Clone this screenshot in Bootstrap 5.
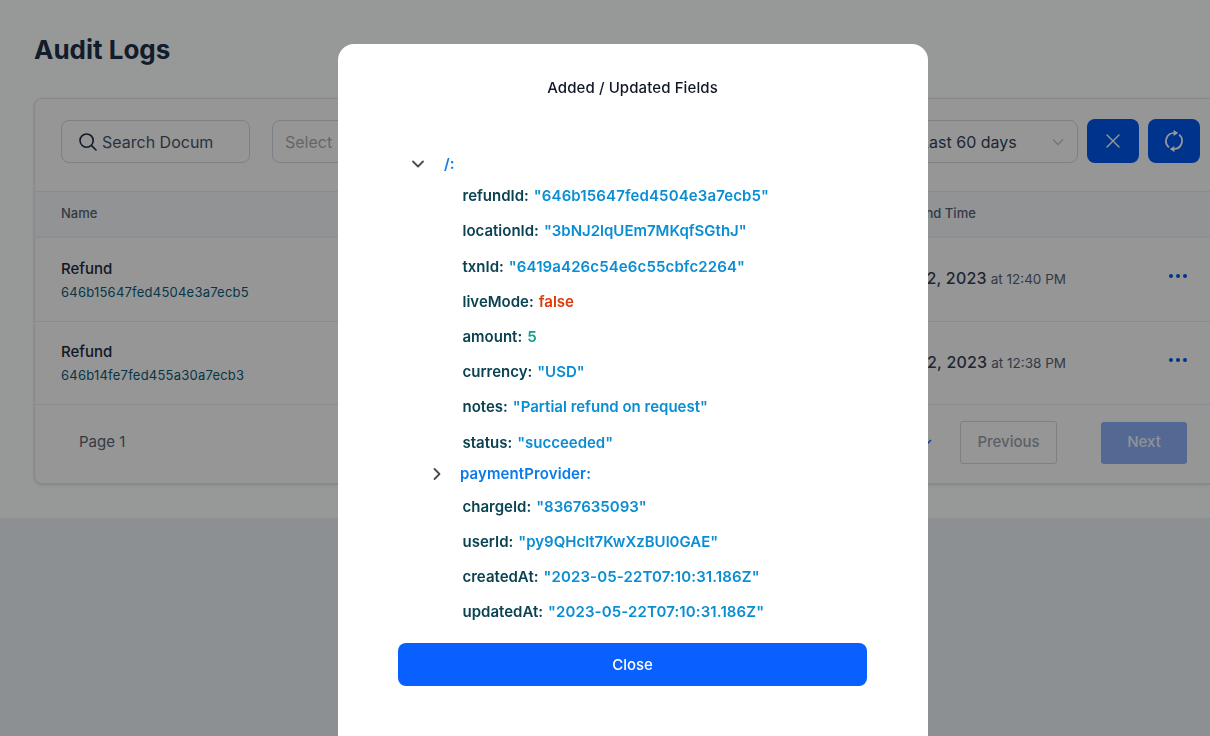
<!DOCTYPE html>
<html lang="en">
<head>
<meta charset="utf-8">
<title>Audit Logs</title>
<link href="https://cdn.jsdelivr.net/npm/bootstrap@5.3.0/dist/css/bootstrap.min.css" rel="stylesheet">
<style>
html,body{height:100%;overflow:hidden}
body{font-family:Inter,"Liberation Sans",sans-serif;color:#1e293b;background:#e9f0f5;font-size:14px}
.pg-top{height:518px;background:#fcfffe;padding:27px 0 0 34px;border-left:1px solid #fff;overflow:hidden}
.pg-title{font-size:26px;font-weight:700;line-height:46px;margin:0 0 25px -1px;color:#1e3048}
.log-panel{width:1200px;height:386px;margin-left:-1px;background:#fbfbfb;border:1px solid #e0e3e6;border-radius:8px;box-shadow:0 1px 3px rgba(0,0,0,.15)}
.filters{height:92px;padding:21px 9px 0 26px;display:flex;align-items:flex-start}
.fld{height:43px;border:1px solid #d0d5dd;border-radius:8px;display:flex;align-items:center;font-size:16px;color:#475467}
.fld-search{width:189px;padding-left:16px;gap:4px}
.fld-sel{width:620px;margin-left:22px;padding-left:12px;color:#a6abb3}
.fld-range{width:186px;padding:0 13px 0 27px;color:#344054;justify-content:space-between}
.sq-btn{width:52px;height:44px;margin:-1px 0 0 9px;background:#0056e8;border-radius:8px;display:flex;align-items:center;justify-content:center;border:0;padding:0}
.log-head{height:47px;display:flex;align-items:center;justify-content:space-between;background:#f2f5f9;border-top:1px solid #e3e8ee;border-bottom:2px solid #eceff3;padding:0 0 0 26px;font-size:13px;font-weight:500;color:#566173}
.head-date{width:347px}
.log-row{height:83.5px;display:flex;align-items:center;padding:0 46px 0 26px;border-bottom:1px solid #e3e8ee}
.r-name{font-size:15px;font-weight:500;line-height:18px;color:#1e293b;margin-top:2px}
.r-id{font-size:13px;line-height:18px;color:#0a5a78;letter-spacing:.23px;margin-top:5px}
.r-date{font-size:16px;font-weight:500;letter-spacing:.2px;color:#344054;display:flex;align-items:baseline;gap:4px;margin:-2px 103px 0 auto;white-space:nowrap}
.r-date small{font-size:13.5px;font-weight:400;letter-spacing:0;color:#566173}
.dots{display:flex;gap:3px;margin-top:-6px}
.dots i{width:4px;height:4px;border-radius:50%;background:#0056e8;display:block}
.log-foot{height:79px;display:flex;align-items:center;padding:0 46px 4px 44px;color:#566173;font-size:15px}
.pg-size{margin-left:auto;margin-right:28px;display:flex;align-items:center;gap:6px;color:#0056e8}
.pg-prev{width:97px;height:43px;border:1px solid #d0d5dd;border-radius:3px;background:transparent;color:#9aa1ab;font-weight:500;margin-right:44px;padding:0}
.pg-next{width:86px;height:42px;border:0;border-radius:3px;background:#8aaff5;color:#eef3fe;font-weight:500;padding:0}
.shade{position:fixed;inset:0;background:rgba(0,0,0,.4);backdrop-filter:blur(.6px);z-index:1040}
.modal-dialog.audit-dlg{max-width:590px;width:590px;margin:44px 0 0 338px}
.audit-dlg .modal-content{border:0;border-radius:16px;height:760px;display:block;padding:0 61px 0 60px}
.dlg-title{font-size:15px;font-weight:500;line-height:20px;letter-spacing:.1px;text-align:center;color:#101828;padding-top:34px;height:105.6px;margin:0}
.tree-head{height:28.8px;display:flex;align-items:center;color:#0a7bea;font-weight:600;font-size:15px;white-space:nowrap}
.tree-head svg{flex:none}
.tree-root{padding-left:13px}
.tree-root span{margin-left:19px}
.tree-sub{padding-left:32px}
.tree-sub span{margin-left:16px;letter-spacing:.1px}
.leaf{height:35.2px;display:flex;align-items:center;gap:5px;padding:1px 0 0 64.5px;font-size:15px;font-weight:600;color:#0a4252;white-space:nowrap}
.v-str{color:#0a8ed3}.v-wide{letter-spacing:.12px}.v-bool{color:#dd3a08}.v-num{color:#12a08f}
.close-btn{display:block;width:469px;height:43px;margin-top:13.4px;padding-top:7px;background:#0a60ff;border:0;border-radius:8px;color:#fff;font-size:15px;font-weight:500}
</style>
</head>
<body>
<div class="pg-top">
  <h1 class="pg-title">Audit Logs</h1>
  <div class="log-panel">
    <div class="filters">
      <div class="fld fld-search"><svg width="20" height="20" viewBox="0 0 20 20" fill="none" stroke="#1e2d42" stroke-width="1.6" stroke-linecap="round"><circle cx="8.6" cy="8.6" r="6.6"/><path d="M13.6 13.6 18 18"/></svg><span>Search Docum</span></div>
      <div class="fld fld-sel">Select</div>
      <div class="fld fld-range"><span>Last 60 days</span><svg width="12" height="8" viewBox="0 0 12 8" fill="none" stroke="#bcc1c8" stroke-width="1.3"><path d="m1 1.5 5 5 5-5"/></svg></div>
      <button class="sq-btn" type="button" aria-label="Clear"><svg width="16" height="16" viewBox="0 0 16 16" fill="none" stroke="#fff" stroke-width="1.4" stroke-linecap="round"><path d="m2 2 12 12M14 2 2 14"/></svg></button>
      <button class="sq-btn" type="button" aria-label="Refresh"><svg width="20" height="22" viewBox="0 0 20 22" fill="none" stroke="#fff" stroke-width="1.7" stroke-linecap="butt"><path d="M10 3A8.1 8.1 0 0 0 4.9 17.3M15.1 4.7A8.1 8.1 0 0 1 10 19"/><path d="M9.6 0 14.2 3 9.6 6zM10.4 16 5.8 19l4.6 3z" fill="#fff" stroke="none"/></svg></button>
    </div>
    <div class="log-head"><span>Name</span><span class="head-date">Date and Time</span></div>
    <div class="log-row"><div><div class="r-name">Refund</div><div class="r-id">646b15647fed4504e3a7ecb5</div></div><div class="r-date">May 22, 2023 <small>at 12:40 PM</small></div><div class="dots"><i></i><i></i><i></i></div></div>
    <div class="log-row"><div><div class="r-name">Refund</div><div class="r-id">646b14fe7fed455a30a7ecb3</div></div><div class="r-date">May 22, 2023 <small>at 12:38 PM</small></div><div class="dots"><i></i><i></i><i></i></div></div>
    <div class="log-foot"><span>Page 1</span><span class="pg-size">10<svg width="10" height="7" viewBox="0 0 10 7" fill="none" stroke="#0056e8" stroke-width="1.3"><path d="m1 1 4 4 4-4"/></svg></span><button class="pg-prev" type="button">Previous</button><button class="pg-next" type="button">Next</button></div>
  </div>
</div>
<div class="shade"></div>
<div class="modal d-block" tabindex="-1" style="z-index:1050">
  <div class="modal-dialog audit-dlg">
    <div class="modal-content">
      <h2 class="dlg-title">Added / Updated Fields</h2>
      <div class="tree-head tree-root"><svg width="14" height="14" viewBox="0 0 14 14" fill="none" stroke="#4a4a4a" stroke-width="1.8" stroke-linecap="round" stroke-linejoin="round"><path d="m2 4.5 5 5 5-5"/></svg><span>/:</span></div>
      <div class="leaf">refundId: <span class="v-str v-wide">"646b15647fed4504e3a7ecb5"</span></div>
      <div class="leaf">locationId: <span class="v-str">"3bNJ2lqUEm7MKqfSGthJ"</span></div>
      <div class="leaf">txnId: <span class="v-str v-wide">"6419a426c54e6c55cbfc2264"</span></div>
      <div class="leaf">liveMode: <span class="v-bool">false</span></div>
      <div class="leaf">amount: <span class="v-num">5</span></div>
      <div class="leaf">currency: <span class="v-str">"USD"</span></div>
      <div class="leaf">notes: <span class="v-str">"Partial refund on request"</span></div>
      <div class="leaf">status: <span class="v-str">"succeeded"</span></div>
      <div class="tree-head tree-sub"><svg width="14" height="14" viewBox="0 0 14 14" fill="none" stroke="#4a4a4a" stroke-width="1.8" stroke-linecap="round" stroke-linejoin="round"><path d="m4.5 2 5 5-5 5"/></svg><span>paymentProvider:</span></div>
      <div class="leaf">chargeId: <span class="v-str">"8367635093"</span></div>
      <div class="leaf">userId: <span class="v-str">"py9QHclt7KwXzBUl0GAE"</span></div>
      <div class="leaf">createdAt: <span class="v-str v-wide">"2023-05-22T07:10:31.186Z"</span></div>
      <div class="leaf">updatedAt: <span class="v-str v-wide">"2023-05-22T07:10:31.186Z"</span></div>
      <button class="close-btn btn" type="button">Close</button>
    </div>
  </div>
</div>
<script src="https://cdn.jsdelivr.net/npm/bootstrap@5.3.0/dist/js/bootstrap.bundle.min.js"></script>
</body>
</html>
